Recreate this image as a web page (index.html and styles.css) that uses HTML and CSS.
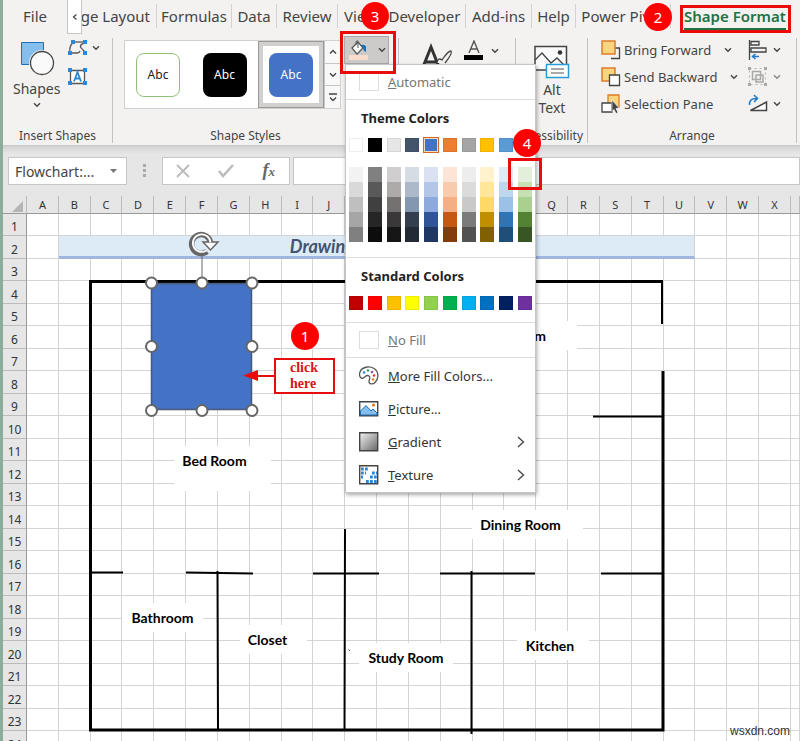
FILE: index.html
```html
<!DOCTYPE html>
<html lang="en">
<head>
<meta charset="utf-8">
<title>Floor plan workbook</title>
<link rel="stylesheet" href="styles.css">
</head>
<body>
<svg width="0" height="0" class="defs" aria-hidden="true">
  <symbol id="down" viewBox="0 0 8 6"><path d="M1 1.2 4 4.2 7 1.2" fill="none" stroke="currentColor" stroke-width="1.4"/></symbol>
</svg>
<div class="app">
  <nav class="tabs">
    <button class="tab file">File</button>
    <button class="scroll" aria-label="Scroll tabs left"><svg width="6" height="8" viewBox="0 0 6 8"><path d="M4.500 1.500 1.500 4l3 2.500" fill="none" stroke="#444" stroke-width="1.200"/></svg></button>
    <button class="tab page"><span>Page Layout</span></button>
    <button class="tab">Formulas</button>
    <button class="tab">Data</button>
    <button class="tab">Review</button>
    <button class="tab">View</button>
    <button class="tab">Developer</button>
    <button class="tab">Add-ins</button>
    <button class="tab">Help</button>
    <button class="tab">Power Pivot</button>
    <button class="tab active"><span>Shape Format</span></button>
  </nav>

  <div class="ribbon">
    <section class="group insert">
      <div class="body">
        <button class="big">
          <svg width="36" height="36" viewBox="0 0 36 36"><path d="M2.500 2.500h22v22h-22z" fill="#83beec" stroke="#1e6fb5"/><circle cx="23" cy="23" r="13" fill="#f3f2f1"/><circle cx="23" cy="23" r="11.500" fill="#fafafa" stroke="#444" stroke-width="1.300"/></svg>
          <span>Shapes</span>
          <svg class="caret" width="8" height="6"><use href="#down"/></svg>
        </button>
        <div class="pair">
          <button class="tool"><svg width="20" height="16" viewBox="0 0 20 16"><path d="M5 2h12" fill="none" stroke="#555" stroke-width="1.300"/><path d="M4.500 3Q1 7 2 12M3 13h5.500q3 0 3.500-2M17 3q-5 1-4.500 4 .5 1 4.500 5" fill="none" stroke="#555" stroke-width="1.300"/><path d="M3 0h4v4H3zM15 0h4v4h-4zM0 11h4v4H0zM15 11h4v4h-4z" fill="#2b88d8"/></svg><svg class="caret" width="8" height="6"><use href="#down"/></svg></button>
          <button class="tool"><svg width="20" height="18" viewBox="0 0 20 18"><path d="M2.500 2.500h14v13h-14z" fill="#fff" stroke="#555" stroke-width="1.300"/><path d="M6 13.500 9.500 4l3.500 9.500M7.500 10.500h4" fill="none" stroke="#2b88d8" stroke-width="1.800"/><path d="M0 0h4v4H0zM15 0h4v4h-4zM0 13h4v4H0zM15 13h4v4h-4z" fill="#2b88d8"/></svg></button>
        </div>
      </div>
      <h2>Insert Shapes</h2>
    </section>

    <section class="group styles">
      <div class="body">
        <div class="gallery">
          <div class="presets">
            <div class="slot"><button class="preset outline">Abc</button></div>
            <div class="slot"><button class="preset black">Abc</button></div>
            <div class="slot chosen"><button class="preset blue">Abc</button></div>
          </div>
          <div class="spin">
            <button aria-label="Up"><svg width="8" height="6" viewBox="0 0 8 6"><path d="M1 4.500 4 1.500 7 4.500" fill="none" stroke="#444" stroke-width="1.400"/></svg></button>
            <button aria-label="Down"><svg width="8" height="6"><use href="#down"/></svg></button>
            <button aria-label="More"><svg width="8" height="9" viewBox="0 0 8 9"><path d="M0 1h8M1 4.500 4 7.500 7 4.500" fill="none" stroke="#444" stroke-width="1.300"/></svg></button>
          </div>
        </div>
        <button class="fill" aria-label="Shape Fill"><svg width="20" height="20" viewBox="0 0 20 20"><path d="M3 8 9 2l5 6-6 6z" fill="#fff" stroke="#555" stroke-width="1.200"/><path d="M9 8V1.500Q8-.5 7 2v3" fill="none" stroke="#555"/><path d="M12 5q4-1 5 1.500V12l-2-1-1-3z" fill="#1e6fb5"/><path d="M0 15h19v5H0z" fill="#f8dccb"/></svg><svg class="caret" width="8" height="6"><use href="#down"/></svg></button>
      </div>
      <h2>Shape Styles</h2>
    </section>

    <section class="group wordart">
      <div class="body">
        <svg width="38" height="36" viewBox="0 0 38 36"><path d="m2 32 10-25 10 25M6 22h12" fill="none" stroke="#333" stroke-width="3"/><path d="M18 23q1-6 5-3 6-9 9-9 2 2-6 12" fill="#f3f2f1" stroke="#444" stroke-width="1.300"/></svg>
        <svg class="letter" width="20" height="20" viewBox="0 0 20 20"><path d="M5 13 10 1l5 12M7 9h6" fill="none" stroke="#555" stroke-width="1.400"/><path d="M0 15h19v5H0z"/></svg>
        <svg class="caret" width="8" height="6"><use href="#down"/></svg>
      </div>
    </section>

    <section class="group access">
      <div class="body">
        <button class="big">
          <svg width="36" height="34" viewBox="0 0 36 34"><path d="M1 1.500h31.500V25H1z" fill="#fafafa" stroke="#444" stroke-width="1.500"/><path d="m1 15 7-7 9 10 6-5 9 9" fill="none" stroke="#444" stroke-width="1.300"/><circle cx="26" cy="7.500" r="2.300" fill="#333"/><path d="M12.500 19.500h22v13h-22z" fill="#fff" stroke="#2b9bd8" stroke-width="1.500"/><path d="M17 24h13M17 28h13" stroke="#555"/></svg>
          <span>Alt<br>Text</span>
        </button>
      </div>
      <h2>Accessibility</h2>
    </section>

    <section class="group arrange">
      <div class="body">
        <div class="lines">
          <button><svg width="20" height="20" viewBox="0 0 20 20"><path d="M10 18.500h8.500V8H14" fill="none" stroke="#444" stroke-width="1.300"/><path d="M1 1h13v13H1z" fill="#fad57f" stroke="#e07b28" stroke-width="1.500"/></svg>Bring Forward <svg class="caret" width="8" height="6"><use href="#down"/></svg></button>
          <button><svg width="20" height="20" viewBox="0 0 20 20"><path d="M1 1h13v13H1z" fill="#fad57f" stroke="#e07b28" stroke-width="1.500"/><path d="M8.500 8h10v10.500h-10z" fill="#fff" stroke="#444" stroke-width="1.300"/></svg>Send Backward <svg class="caret" width="8" height="6"><use href="#down"/></svg></button>
          <button><svg width="20" height="20" viewBox="0 0 20 20"><path d="M7 1h11v12H7z" fill="#fad57f" stroke="#e07b28" stroke-width="1.300"/><path d="M1 9h10v9H1z" fill="#fff" stroke="#444" stroke-width="1.300"/><path d="m11 6 7 8-3 .5 2 4-2 1-2-4-2 2z" fill="#444" stroke="#fff" stroke-width=".6"/></svg>Selection Pane</button>
        </div>
        <div class="lines icons">
          <button aria-label="Align"><svg width="20" height="20" viewBox="0 0 20 20"><path d="M1.500 0v20M3 1.500h8V5H3zM3 8h15v4H3z" fill="none" stroke="#444" stroke-width="1.300"/><path d="M11 16.500H5M7.500 14 4.500 16.500l3 2.500" fill="none" stroke="#1e7ac4" stroke-width="1.500"/></svg><svg class="caret" width="8" height="6"><use href="#down"/></svg></button>
          <button class="off" aria-label="Group"><svg width="20" height="20" viewBox="0 0 20 20"><path d="M4.500 4.500h8v8h-8zM8 8h7v7H8z" fill="none" stroke="#777" stroke-width="1.500"/><path d="M1.500 1.500h16v16h-16z" fill="none" stroke="#888" stroke-dasharray="2 3"/><path d="M0 0h3v3H0zM16 0h3v3h-3zM0 16h3v3H0zM16 16h3v3h-3z" fill="#777"/></svg><svg class="caret" width="8" height="6"><use href="#down"/></svg></button>
          <button aria-label="Rotate"><svg width="20" height="20" viewBox="0 0 20 20"><path d="M2.500 16.500h16V8z" fill="#fff" stroke="#444" stroke-width="1.500"/><path d="M1.500 11Q1 4 9 4.500M6 1l3.500 3.500L6 8" fill="none" stroke="#1e7ac4" stroke-width="1.500"/></svg><svg class="caret" width="8" height="6"><use href="#down"/></svg></button>
        </div>
      </div>
      <h2>Arrange</h2>
    </section>
  </div>

  <div class="formula">
    <button class="name">Flowchart:... <svg width="8" height="4" viewBox="0 0 8 4"><path d="M0 0h7L3.500 4z" fill="#777"/></svg></button>
    <svg class="dots" width="3" height="14" viewBox="0 0 3 14"><path d="M0 0h3v3H0zM0 5h3v3H0zM0 10h3v3H0z" fill="#aaa"/></svg>
    <div class="fx">
      <svg width="14" height="14" viewBox="0 0 14 14"><path d="m1 1 12 12M13 1 1 13" stroke="#bbb" stroke-width="1.800"/></svg>
      <svg width="16" height="14" viewBox="0 0 16 14"><path d="m1 7 4 5L15 1" fill="none" stroke="#bbb" stroke-width="2.500"/></svg>
      <b>f<small>x</small></b>
    </div>
    <input class="entry" aria-label="Formula bar">
  </div>

  <main class="sheet">
    <table>
      <colgroup><col class="head"><col span="24"><col class="last"></colgroup>
      <thead><tr><th class="corner"><svg width="11" height="11" viewBox="0 0 11 11"><path d="M11 0v11H0z" fill="#b5b5b5"/></svg></th><th>A</th><th>B</th><th>C</th><th>D</th><th>E</th><th>F</th><th>G</th><th>H</th><th>I</th><th>J</th><th>K</th><th>L</th><th>M</th><th>N</th><th>O</th><th>P</th><th>Q</th><th>R</th><th>S</th><th>T</th><th>U</th><th>V</th><th>W</th><th>X</th><th></th></tr></thead>
      <tbody id="rows"></tbody>
    </table>

    <div class="plan">
      <span class="room living">Room</span>
      <span class="room bed">Bed Room</span>
      <span class="room dining">Dining Room</span>
      <span class="room bath">Bathroom</span>
      <span class="room closet">Closet</span>
      <span class="room study">Study Room</span>
      <span class="room kitchen">Kitchen</span>
      <svg class="walls" width="700" height="545" viewBox="0 196 700 545">
        <g fill="none" stroke="#000">
          <path stroke-width="3" d="M662 281.500H90.500V730H663V371"/>
          <path stroke-width="2" d="M662 280v44M593 416.500h70M91 572.500h32M186 572.500l67 1M313 573.500h66M440 573.500h95M601 573.500h62M217.500 571l.5 159M345 529l-.5 201M471.500 571v163"/>
          <path d="m348.500 649.500 1.500 1.500" stroke="#555"/>
        </g>
        <path d="M151.500 283.500h100v126h-100z" fill="#4472c4" stroke="#4a5878" stroke-width="1.500"/>
        <path d="M202 252v28" stroke="#666"/>
        <g fill="#fff" stroke="#666" stroke-width="2"><circle cx="151.500" cy="283" r="5.500"/><circle cx="202" cy="283" r="5.500"/><circle cx="252" cy="283" r="5.500"/><circle cx="151.500" cy="346.500" r="5.500"/><circle cx="252" cy="346.500" r="5.500"/><circle cx="151.500" cy="410.500" r="5.500"/><circle cx="202" cy="410.500" r="5.500"/><circle cx="252" cy="410.500" r="5.500"/></g>
        <path d="M207 251.500a9.500 9.500 0 1 1 3.500-9" fill="none" stroke="#666" stroke-width="5.500"/>
        <path d="M203 242h15l-7.500 8z" fill="#fff" stroke="#666" stroke-width="1.500"/>
        <path d="M206.500 250.500a8.800 8.800 0 1 1 4-8" fill="none" stroke="#fff" stroke-width="1.800"/>
        <path d="M275 376h-20" stroke="#e80c0c" stroke-width="2"/><path d="m243 375.500 15-5.500v11z" fill="#e80c0c"/>
      </svg>
      <div class="callout">click<br>here</div>
    </div>
  </main>

  <div class="menu">
    <button class="item dim"><i class="box"></i><span><u>A</u>utomatic</span></button>
    <section class="theme">
      <h3>Theme Colors</h3>
      <div class="row" id="theme"></div>
      <div class="row" id="tints"></div>
    </section>
    <section class="standard">
      <h3>Standard Colors</h3>
      <div class="row" id="standard"></div>
    </section>
    <button class="item dim"><i class="box"></i><span><u>N</u>o Fill</span></button>
    <div class="more">
      <button class="item"><svg width="20" height="20" viewBox="0 0 20 20"><path d="M5 11.500C2 14-.5 10 1 6 3 1 10-.5 15 2.500c5 3 5 10 1 14-2 2-6 2-6-1 0-2 2-4 0-5.500C8 8.500 7 10 5 11.500z" fill="#fff" stroke="#555" stroke-width="1.300"/><circle cx="5" cy="6.500" r="1.300" fill="#2b88d8"/><circle cx="9" cy="4.500" r="1.300" fill="#3a9c5c"/><circle cx="13" cy="6" r="1.300" fill="#8a56b8"/><circle cx="15" cy="9.500" r="1.300" fill="#e3342f"/><circle cx="14" cy="13.500" r="1.300" fill="#e07b28"/></svg><span><u>M</u>ore Fill Colors...</span></button>
      <button class="item"><svg width="20" height="16" viewBox="0 0 20 16"><path d="M.7.700h18v14H.7z" fill="#fff" stroke="#444" stroke-width="1.400"/><path d="M1.500 10 7 4.500l5 5.500 2-2 4 4v2H1.500z" fill="#83beec" stroke="#1e6fb5"/><circle cx="14.500" cy="4" r="1.600" fill="#e07b28"/></svg><span><u>P</u>icture...</span></button>
      <button class="item"><svg width="20" height="20" viewBox="0 0 20 20"><defs><linearGradient id="g" x2="1" y2="1"><stop offset="0" stop-color="#f4f4f4"/><stop offset="1" stop-color="#666"/></linearGradient></defs><path d="M.7.700h18v18H.7z" fill="url(#g)" stroke="#444" stroke-width="1.400"/></svg><span><u>G</u>radient</span><svg class="next" width="8" height="12" viewBox="0 0 8 12"><path d="m1 1 5.500 5L1 11" fill="none" stroke="#444" stroke-width="1.300"/></svg></button>
      <button class="item"><svg width="20" height="20" viewBox="0 0 20 20"><path d="M.7.700h18v18H.7z" fill="#fff" stroke="#444" stroke-width="1.400"/><path d="M2 4h8M2 8h5M2 12h2M13 8h5M11 12h7M7 16.500h11" stroke="#2b88d8" stroke-width="2.800" stroke-dasharray="2.800 1.200"/></svg><span><u>T</u>exture</span><svg class="next" width="8" height="12" viewBox="0 0 8 12"><path d="m1 1 5.500 5L1 11" fill="none" stroke="#444" stroke-width="1.300"/></svg></button>
    </div>
  </div>

  <div class="mark fill-mark"></div>
  <div class="mark tab-mark"></div>
  <div class="mark tint-mark"></div>
  <span class="badge one">1</span>
  <span class="badge two">2</span>
  <span class="badge three">3</span>
  <span class="badge four">4</span>
  <span class="credit">wsxdn.com</span>
</div>
<script src="script.js"></script>
</body>
</html>
```
FILE: styles.css
```css
* { box-sizing: border-box; }
body { margin: 0; height: 100vh; overflow: hidden; font-family: "Noto Sans", "Open Sans", sans-serif; color: #444; background: #fff; }
button { font: inherit; color: inherit; background: none; border: 0; padding: 0; margin: 0; white-space: nowrap; }
h2, h3 { margin: 0; }
svg { display: block; flex: none; }
.defs { position: absolute; }
.app { position: relative; height: 100vh; overflow: hidden; border-left: 3px solid #8cad9c; background: #f3f2f1; }

.tabs { display: grid; grid-template-columns: 64px 15px 75px 75px 45px 61px 46px 82px 66px 44px 95px 1fr; height: 34px; font-size: 15px; }
.tab { display: flex; justify-content: center; align-items: center; height: 24px; margin-top: 4px; border-right: 1px solid #d4d2d0; overflow: hidden; }
.tab.file { border: 0; }
.tab.page { justify-content: flex-end; padding-right: 6px; }
.tab.active { border: 0; justify-content: flex-start; padding-left: 13px; font-weight: 600; color: #217346; height: 26px; overflow: visible; }
.tab.active span { border-bottom: 2px solid #217346; line-height: 24px; }
.scroll { background: #fff; border: 1px solid #c8c6c4; border-top: 0; display: flex; align-items: center; justify-content: center; }

.ribbon { display: grid; grid-template-columns: 110px 286px 117px 72px 209px 1fr; height: 112px; border-bottom: 1px solid #c8c8c8; }
.group { display: flex; flex-direction: column; margin: 4px 0; border-right: 1px solid #c4c2c0; overflow: hidden; }
.group h2 { font-size: 12px; font-weight: 400; text-align: center; line-height: 14px; white-space: nowrap; }
.access h2 { display: flex; justify-content: flex-end; padding-right: 4px; }
.body { display: flex; height: 90px; flex: none; }
.big { display: flex; flex-direction: column; align-items: center; font-size: 14px; line-height: 18px; gap: 4px; }
.insert .body { padding: 2px 0 0 10px; gap: 8px; }
.pair { display: flex; flex-direction: column; gap: 12px; }
.tool { display: flex; align-items: center; gap: 4px; }
.styles .body { padding: 2px 0 0 11px; gap: 3px; align-items: flex-start; }
.styles h2 { padding-right: 20px; }
.gallery { display: flex; width: 217px; height: 69px; background: #fff; border: 1px solid #d2d0ce; }
.presets { flex: 1; display: flex; align-items: center; justify-content: space-between; }
.slot { display: flex; align-items: center; justify-content: center; width: 66px; height: 67px; }
.chosen { border: 1px solid #999; box-shadow: inset 0 0 0 4px #d2d0ce; }
.preset { width: 44px; height: 44px; border-radius: 8px; color: #fff; font-size: 12px; }
.outline { border: 1px solid #8fc278; color: #222; }
.black { background: #000; }
.blue { background: #4472c4; }
.spin { width: 16px; display: flex; flex-direction: column; background: #f8f8f8; }
.spin button { flex: 1; display: flex; align-items: center; justify-content: center; border-left: 1px solid #c8c6c4; }
.spin button + button { border-top: 1px solid #c8c6c4; }
.fill { display: flex; align-items: center; gap: 9px; width: 45px; height: 28px; padding-left: 4px; flex: none; background: #cdcbc9; border: 1px solid #aaa; margin-top: -4px; }
.styles { overflow: visible; }
.wordart .body { padding: 2px 0 0 20px; gap: 7px; align-items: flex-start; }
.wordart .caret { margin-top: 8px; }
.access .body { padding: 7px 0 0 18px; align-items: flex-start; }
.access .big { gap: 2px; }
.arrange .body { padding: 2px 0 0 13px; gap: 23px; }
.lines { display: flex; flex-direction: column; gap: 7px; font-size: 13px; width: 124px; }
.lines button { display: flex; align-items: center; gap: 3px; height: 20px; }
.lines .caret { margin-left: 10px; }
.icons .caret { margin-left: 2px; }
.off { opacity: 0.6; }
.group h2 { margin-top: 1px; }

.formula { display: flex; align-items: center; height: 50px; padding-left: 5px; background: linear-gradient(#d2d2d2, #e6e6e6 8px); }
.name { display: flex; align-items: center; justify-content: space-between; width: 119px; height: 28px; padding: 0 8px 0 6px; background: #fff; border: 1px solid #c6c6c6; font-size: 14px; }
.dots { margin: 0 16px 0 16px; }
.fx { display: flex; align-items: center; justify-content: space-between; width: 128px; height: 28px; padding: 0 14px 0 13px; background: #fff; border: 1px solid #c6c6c6; }
.fx b { font: italic bold 18px/20px "Liberation Serif", serif; color: #666; }
.fx small { font-size: 13px; }
.entry { flex: 1; height: 28px; margin-left: 3px; background: #fff; border: 1px solid #c6c6c6; min-width: 0; }

.sheet { position: relative; }
table { table-layout: fixed; width: 100%; border-spacing: 0; background: #fff; }
.head { width: 24px; }
.last { width: 9px; }
th { background: #e6e6e6; font-weight: 400; font-size: 11px; color: #333; padding: 0; border-right: 1px solid #bbb; border-bottom: 1px solid #999; }
thead th { height: 18px; line-height: 16px; }
.corner svg { margin: 4px 0 0 9px; }
tbody th { font-size: 12px; line-height: 16px; vertical-align: bottom; border-right: 1px solid #999; border-bottom: 1px solid #bbb; }
td { padding: 0; border-right: 1px solid #d4d4d4; border-bottom: 1px solid #d4d4d4; }
tbody tr { height: 22px; }
tbody tr:nth-child(even) { height: 23px; }
.banner { background: #ddebf7; border-bottom: 3px solid #a0b6e0; color: #44546a; font: italic bold 18px/19px Lato, sans-serif; padding-left: 231px; }

.plan { position: absolute; top: 0; left: -3px; width: 700px; height: 545px; }
.walls { position: absolute; top: 0; left: 0; }
.room { position: absolute; display: flex; align-items: center; justify-content: center; height: 29px; background: #fff; color: #000; font: bold 14px/16px Lato, sans-serif; white-space: nowrap; }
.living { left: 480px; top: 125px; width: 97px; padding-right: 31px; justify-content: flex-end; }
.bed { left: 174px; top: 250px; width: 97px; height: 45px; align-items: flex-start; padding: 7px 16px 0 0; }
.dining { left: 472px; top: 314px; width: 111px; padding-right: 14px; }
.bath { left: 122px; top: 407px; width: 81px; }
.closet { left: 240px; top: 429px; width: 67px; padding-right: 12px; }
.study { left: 359px; top: 447px; width: 94px; }
.kitchen { left: 517px; top: 435px; width: 72px; padding-right: 6px; }
.callout { position: absolute; left: 274px; top: 162px; width: 61px; height: 36px; border: 2px solid #e80c0c; background: #fff; padding-left: 14px; color: #d81414; font: bold 14px/16px "Liberation Serif", serif; }

.menu { position: absolute; left: 342px; top: 64px; width: 191px; background: #fff; border: 1px solid #c6c6c6; box-shadow: 1px 2px 4px #0005; color: #333; }
.item { display: flex; align-items: center; gap: 9px; width: 100%; height: 34px; padding: 0 10px 0 13px; font-size: 13px; }
.item span { flex: 1; text-align: left; }
.item.dim { color: #777; }
.dim + section { border-top: 1px solid #dcdcdc; }
.box { width: 20px; height: 18px; border: 1px solid #ddd; }
.more { border-top: 1px solid #dcdcdc; padding: 1px 0; }
.more .item { height: 33px; }
h3 { font-size: 13px; line-height: 18px; color: #222; padding-left: 12px; }
.theme { padding: 9px 3px 15px; }
.standard { padding: 9px 3px 12px; border-top: 1px solid #dcdcdc; border-bottom: 1px solid #dcdcdc; }
.row { display: flex; justify-content: space-between; margin-top: 11px; }
#tints { margin-top: 15px; }
.swatch { width: 14px; height: 14px; outline: 1px solid #0001; outline-offset: -1px; }
.swatch.on { outline: 1px solid #d2692a; outline-offset: 0; border: 1px solid #f3d8c2; }
.column { width: 14px; }
.column .swatch { height: 15px; outline: 0; }

.mark { position: absolute; border: 3px solid #e80c0c; }
.fill-mark { left: 337px; top: 31px; width: 56px; height: 43px; }
.tab-mark { left: 677px; top: 5px; width: 111px; height: 28px; }
.tint-mark { left: 505px; top: 158px; width: 34px; height: 32px; }
.badge { position: absolute; width: 28px; height: 28px; border-radius: 50%; background: #f00; color: #fff; font-size: 15px; line-height: 28px; text-align: center; }
.one { left: 288px; top: 322px; }
.two { left: 641px; top: 3px; }
.three { left: 358px; top: 2px; }
.four { left: 510px; top: 129px; }
.credit { position: absolute; right: 10px; bottom: 2px; color: #333; font: 12px/16px "Liberation Sans", sans-serif; }
```
FILE: script.js
```js
const rows = document.getElementById("rows");
for (let r = 1; r <= 24; r++) {
  const cells = r === 2
    ? '<td></td><td class="banner" colspan="20">Drawing</td>' + "<td></td>".repeat(4)
    : "<td></td>".repeat(25);
  rows.insertAdjacentHTML("beforeend", `<tr><th>${r}</th>${cells}</tr>`);
}

const swatch = (color, extra = "") => `<div class="swatch${extra}" style="background:${color}"></div>`;

const theme = ["#fff", "#000", "#e7e6e6", "#44546a", "#4472c4", "#ed7d31", "#a5a5a5", "#ffc000", "#5b9bd5", "#70ad47"];
document.getElementById("theme").innerHTML = theme.map((c, i) => swatch(c, i === 4 ? " on" : "")).join("");

const tints = [
  ["#f2f2f2", "#d9d9d9", "#bfbfbf", "#a6a6a6", "#808080"],
  ["#808080", "#595959", "#404040", "#262626", "#0d0d0d"],
  ["#d0cece", "#aeaaaa", "#757171", "#3a3838", "#161616"],
  ["#d6dce4", "#acb9ca", "#8497b0", "#333f4f", "#222b35"],
  ["#d9e1f2", "#b4c6e7", "#8ea9db", "#305496", "#203764"],
  ["#fce4d6", "#f8cbad", "#f4b084", "#c65911", "#833c0c"],
  ["#ededed", "#dbdbdb", "#c9c9c9", "#7b7b7b", "#525252"],
  ["#fff2cc", "#ffe699", "#ffd966", "#bf8f00", "#806000"],
  ["#ddebf7", "#bdd7ee", "#9bc2e6", "#2f75b5", "#1f4e78"],
  ["#e2efda", "#c6e0b4", "#a9d08e", "#548235", "#375623"]
];
document.getElementById("tints").innerHTML = tints.map(t => `<div class="column">${t.map(c => swatch(c)).join("")}</div>`).join("");

const standard = ["#c00000", "#f00", "#ffc000", "#ff0", "#92d050", "#00b050", "#00b0f0", "#0070c0", "#002060", "#7030a0"];
document.getElementById("standard").innerHTML = standard.map(c => swatch(c)).join("");
```
